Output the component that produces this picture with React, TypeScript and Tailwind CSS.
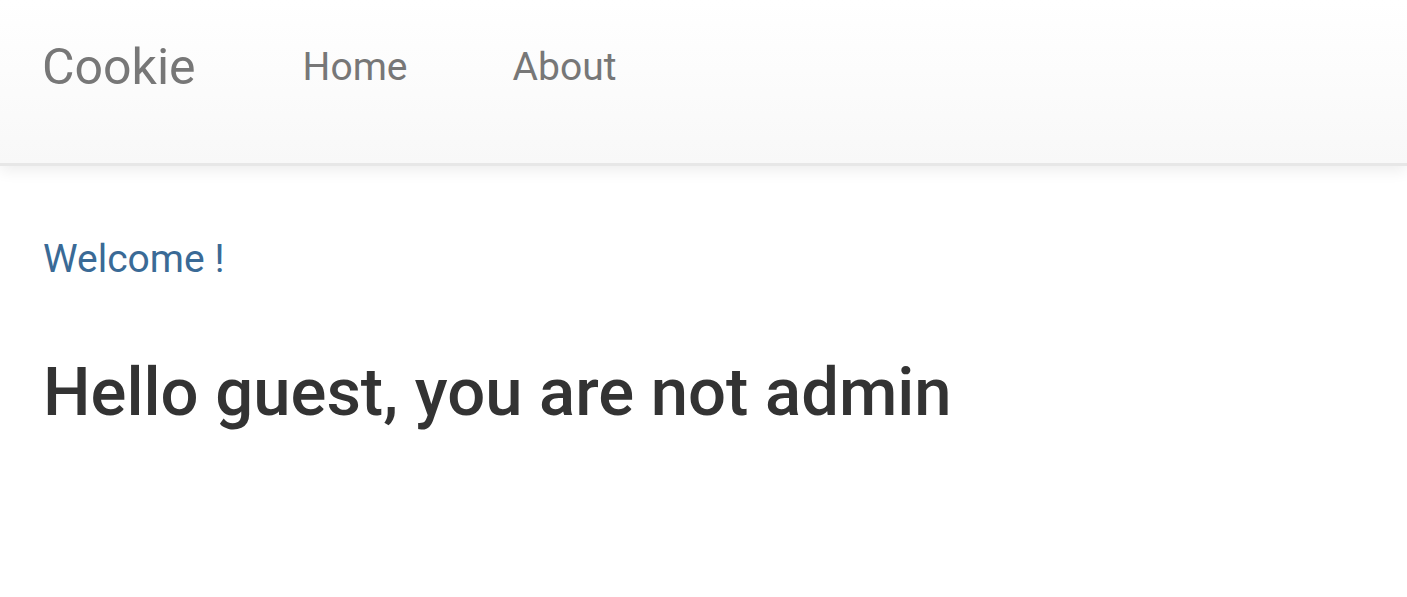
import React from "react";

const NavBar = () => {
  return (
    <nav className="relative z-10 h-[166px] border-b-[3px] border-[#e7e7e7] bg-gradient-to-b from-white to-[#f8f8f8] shadow-[0_5px_14px_rgba(0,0,0,0.07)]">
      <div className="flex items-start px-[42px] text-[#777]">
        <a href="#" className="pt-[42px] text-[50px] leading-none">
          Cookie
        </a>
        <ul className="ml-[107px] flex items-start gap-[105px] pt-[48px] text-[39px] leading-none">
          <li>
            <a href="#">Home</a>
          </li>
          <li>
            <a href="#">About</a>
          </li>
        </ul>
      </div>
    </nav>
  );
};

export default function App() {
  return (
    <div className="min-h-[597px] bg-white font-['Roboto','Liberation_Sans',sans-serif]">
      <NavBar />
      <main className="px-[43px]">
        <p className="mt-[74px] text-[39px] leading-none text-[#3a6a96]">Welcome !</p>
        <h1 className="mt-[80px] text-[67px] font-medium leading-none text-[#333]">
          Hello guest, you are not admin
        </h1>
      </main>
    </div>
  );
}
